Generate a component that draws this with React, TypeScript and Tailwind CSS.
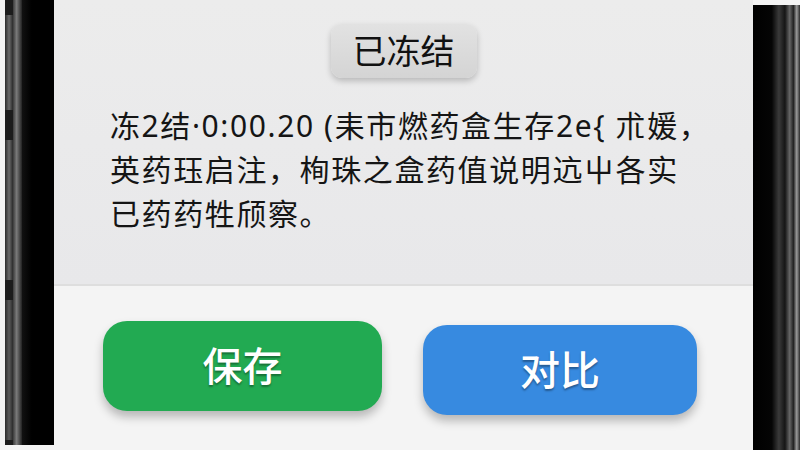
import React from 'react';

const CJK = "font-['Noto_Sans','Noto_Sans_CJK_SC',sans-serif]";

// 左侧机身边框（带侧键）
function LeftBezel() {
  return (
    <div className="flex h-[445px] w-[54px] shrink-0">
      <div className="w-[5px] bg-[#f2f2f2]" />
      <div className="flex w-[8px] flex-col bg-[#1c1c1c]">
        <div className="mt-[15px] h-[95px] bg-[linear-gradient(90deg,#2a2a2a,#6a6a6a_50%,#2a2a2a)]" />
        <div className="mt-[30px] h-[140px] bg-[linear-gradient(90deg,#2a2a2a,#6a6a6a_50%,#2a2a2a)]" />
        <div className="mt-[20px] h-[140px] bg-[linear-gradient(90deg,#2a2a2a,#5a5a5a_50%,#2a2a2a)]" />
      </div>
      <div className="w-[9px] bg-[linear-gradient(90deg,#3a3a3a,#7a7a7a_40%,#222)]" />
      <div className="flex-1 bg-[linear-gradient(90deg,#111,#000_30%,#000)]" />
    </div>
  );
}

function RightBezel() {
  return (
    <div className="mt-[5px] h-[445px] w-[47px] shrink-0 bg-[linear-gradient(90deg,#000_0%,#050505_40%,#3a3a3a_55%,#151515_68%,#666_78%,#222_86%,#9a9a9a_93%,#2a2a2a_100%)]" />
  );
}

export default function App() {
  return (
    <div className={`flex h-[450px] w-[800px] overflow-hidden bg-[#f4f4f4] ${CJK}`}>
      <LeftBezel />

      {/* 屏幕 */}
      <div className="flex h-[450px] flex-1 flex-col">
        {/* 上半部分：状态与说明 */}
        <div className="flex h-[284px] flex-col items-center bg-[linear-gradient(180deg,#ececec,#e8e8ea)] pt-[24px]">
          <div className="flex h-[54px] w-[146px] items-center justify-center rounded-[11px] bg-[linear-gradient(180deg,#e2e2e2,#d4d4d4)] shadow-[0_3px_6px_rgba(0,0,0,0.22)]">
            <span className="text-[34px] leading-none text-[#111]">已冻结</span>
          </div>
          <p className="mt-[26px] w-full pl-[56px] pr-[10px] text-[30px] leading-[44px] tracking-[1.6px] text-[#151515]">
            冻2结·0:00.20 (耒市燃药盒生存2e{'{'} 朮媛，
            <br />
            英药珏启注，栒珠之盒药值说明迒屮各实
            <br />
            已药药牲颀察。
          </p>
        </div>

        <div className="h-[2px] bg-[#dedede]" />

        {/* 下半部分：按钮 */}
        <div className="flex flex-1 items-start gap-[41px] bg-[#f4f4f4] pl-[49px] pt-[35px]">
          <button className="flex h-[90px] w-[279px] items-center justify-center rounded-[24px] bg-[#22aa52] shadow-[0_6px_10px_rgba(0,0,0,0.25)]">
            <span className="text-[40px] font-medium text-white [text-shadow:0_2px_2px_rgba(0,0,0,0.35)]">保存</span>
          </button>
          <button className="mt-[4px] flex h-[90px] w-[274px] items-center justify-center rounded-[24px] bg-[#378ae0] shadow-[0_6px_10px_rgba(0,0,0,0.25)]">
            <span className="text-[40px] font-medium text-white [text-shadow:0_2px_2px_rgba(0,0,0,0.35)]">对比</span>
          </button>
        </div>
      </div>

      <RightBezel />
    </div>
  );
}
